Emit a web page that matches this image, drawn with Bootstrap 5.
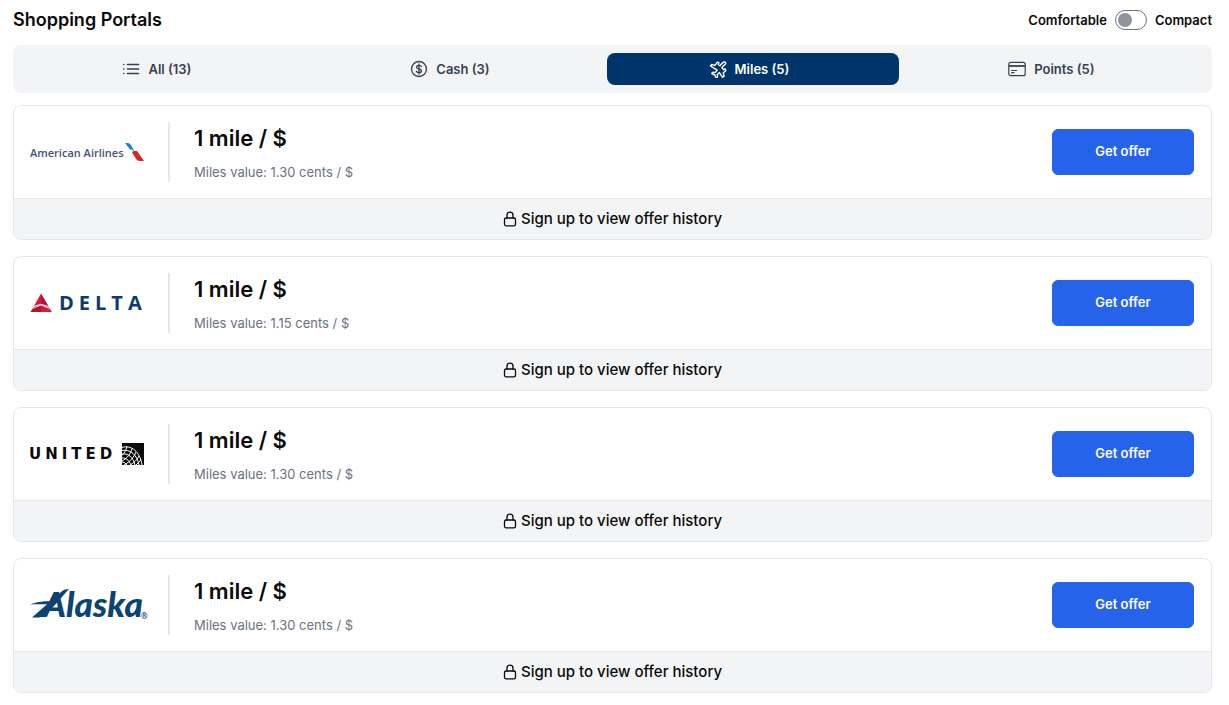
<!DOCTYPE html>
<html lang="en">
<head>
<meta charset="utf-8">
<meta name="viewport" content="width=device-width, initial-scale=1">
<title>Shopping Portals</title>
<link href="https://cdn.jsdelivr.net/npm/bootstrap@5.3.0/dist/css/bootstrap.min.css" rel="stylesheet">
<style>
  body { font-family: Inter, "Liberation Sans", sans-serif; color: #0a0a0a; background: #fff; padding: 7px 17px 12px 13px; }
  .page-title { font-size: 18px; line-height: 26px; font-weight: 600; }
  .density { font-size: 13px; line-height: 20px; font-weight: 600; }
  .density .form-check-input { width: 32px; height: 20px; margin: 0; border: 1px solid #6b7280; box-shadow: none; background-image: none; appearance: none; display: flex; align-items: center; padding: 2px; }
  .density .form-check-input::before { content: ""; width: 14px; height: 14px; border-radius: 50%; background: #8f949c; }
  .density .form-check-input:checked { background-color: #fff; justify-content: flex-end; }
  .portal-tabs { background: #f3f4f6; border-radius: 8px; }
  .portal-tabs .nav-link { background: transparent; font-size: 13px; line-height: 20px; font-weight: 600; color: #374151; padding: 6px 8px 6px 0; border-radius: 8px; }
  .portal-tabs .nav-link.active { background: #00356b; color: #fff; }
  .offer-card { border: 1px solid #e5e7eb; border-radius: 8px; overflow: hidden; }
  .offer-body { padding: 16px 17px 16px 16px; }
  .offer-logo { width: 140px; height: 60px; border-right: 2px solid #e5e7eb; }
  .offer-rate { font-size: 22px; line-height: 32px; font-weight: 600; }
  .offer-value { font-size: 13px; line-height: 20px; color: #6b7280; }
  .btn-offer { --bs-btn-bg: #2563eb; --bs-btn-color: #fff; --bs-btn-hover-bg: #1d4ed8; --bs-btn-hover-color: #fff; --bs-btn-border-color: #2563eb; width: 142px; height: 46px; font-size: 13px; font-weight: 600; border-radius: 6px; }
  .offer-history { background: #f3f4f6; border-top: 1px solid #e5e7eb; padding: 8px; font-size: 15px; line-height: 24px; font-weight: 500; }
  .offer-history a { color: #0a0a0a; }
  .line-icon { fill: none; stroke: currentColor; stroke-linecap: round; stroke-linejoin: round; }
</style>
</head>
<body>
<svg class="d-none" aria-hidden="true">
  <symbol id="lock" viewBox="0 0 14 16"><rect x="1.5" y="7" width="11" height="7.8" rx="1.6"/><path d="M4 7V4.2a3 3 0 0 1 6 0V7"/></symbol>
</svg>

<header class="d-flex justify-content-between align-items-center mb-2 pb-1">
  <h1 class="page-title mb-0">Shopping Portals</h1>
  <div class="density d-flex align-items-center gap-2">
    <label for="density">Comfortable</label>
    <div class="form-switch p-0 m-0 d-flex"><input class="form-check-input" type="checkbox" role="switch" id="density"></div>
    <label for="density">Compact</label>
  </div>
</header>

<nav class="portal-tabs nav d-flex gap-2 p-2" aria-label="Portal type">
  <button type="button" class="nav-link border-0 flex-fill d-flex justify-content-center align-items-center gap-2">
    <svg class="line-icon" width="18" height="18" viewBox="0 0 18 18" stroke-width="1.6"><path d="M5.500 4.500H16.500M5.500 9H16.500M5.500 13.500H16.500M1.800 4.500h.1M1.800 9h.1M1.800 13.500h.1"/></svg>All (13)</button>
  <button type="button" class="nav-link border-0 flex-fill d-flex justify-content-center align-items-center gap-2">
    <svg class="line-icon" width="18" height="18" viewBox="0 0 18 18" stroke-width="1.3"><circle cx="9" cy="9" r="7.5"/><path d="M11.4 6.7C11 5.8 10.1 5.4 9 5.4c-1.400 0-2.400.7-2.400 1.800 0 2.600 4.900 1 4.900 3.600 0 1.200-1.100 1.900-2.500 1.900-1.300 0-2.200-.5-2.600-1.500M9 4v10"/></svg>Cash (3)</button>
  <button type="button" class="nav-link active border-0 flex-fill d-flex justify-content-center align-items-center gap-2" aria-current="page">
    <svg class="line-icon" width="18" height="18" viewBox="0 0 18 18" stroke-width="1.4"><path d="M11 5l3-3c.8-.8 1.800-.9 2.300-.4s.4 1.500-.4 2.300l-3 3 1.500 2.200 1.800-.8.6 1.600-2.600 2.400.900 3.200-1.500 1.200-3.200-4.700-2.200 2.200.4 2.200-1.300 1-1.500-3-3-1.500 1-1.300 2.200.4L8.200 9.600 1.500 5.400l1.200-1.500 3.200.9L8.300 1.500l1.600.6-.8 1.800z" transform="translate(0 .6)"/></svg>Miles (5)</button>
  <button type="button" class="nav-link border-0 flex-fill d-flex justify-content-center align-items-center gap-2">
    <svg class="line-icon" width="18" height="18" viewBox="0 0 18 18" stroke-width="1.2"><rect x=".8" y="2.3" width="16.400" height="13.400" rx="2"/><path stroke-width="1.8" stroke-linecap="butt" d="M1 6h16"/><path d="M3.600 10.500H8.500M3.600 12.700H6"/></svg>Points (5)</button>
</nav>

<main class="d-flex flex-column gap-3 pt-2 mt-1">
  <article class="offer-card">
    <div class="offer-body d-flex align-items-center">
      <div class="offer-logo flex-shrink-0 d-flex align-items-center">
        <svg width="116" height="40" viewBox="0 0 116 40" role="img" aria-label="American Airlines">
          <text x="0" y="25" font-family="Open Sans, sans-serif" font-size="11" font-weight="600" fill="#42527d">American Airlines</text>
          <path d="M95 11h2.500c2 0 2.800 1 3.700 2.500l3.300 5.500c-1.500-1.500-3-1.500-4.500-1.500z" fill="#1487c4"/>
          <path d="M101.500 18.500c1.500-.6 3-.3 4 .5l-1.500 2z" fill="#b8c1c8"/>
          <path d="M102 20.500c1.500-1.500 3-1.800 5-1.400l7 9.900h-4c-2 0-3-.7-4-2.200z" fill="#d22a22"/>
        </svg>
      </div>
      <div class="ps-4 flex-grow-1">
        <h2 class="offer-rate mb-2">1 mile / $</h2>
        <p class="offer-value mb-0">Miles value: 1.30 cents / $</p>
      </div>
      <button type="button" class="btn btn-offer">Get offer</button>
    </div>
    <div class="offer-history d-flex justify-content-center"><a href="#" class="text-decoration-none d-flex align-items-center gap-1"><svg class="line-icon" width="14" height="16" stroke-width="1.3"><use href="#lock"/></svg>Sign up to view offer history</a></div>
  </article>

  <article class="offer-card">
    <div class="offer-body d-flex align-items-center">
      <div class="offer-logo flex-shrink-0 d-flex align-items-center">
        <svg width="118" height="40" viewBox="0 0 118 40" role="img" aria-label="Delta">
          <path d="M11 10.500v10.300L4 23z" fill="#e31837"/><path d="M11 10.500v10.300L18.500 23z" fill="#a6192e"/>
          <path d="M11 21.800L3.500 24 .5 29H11z" fill="#a6192e"/><path d="M11 21.800L18.700 24 22 29H11z" fill="#cf1f3a"/>
          <path d="M2.500 25.500L11 22l8.500 3.500" fill="none" stroke="#fff" stroke-width=".8"/>
          <text x="29" y="27" font-family="Open Sans, sans-serif" font-size="20" font-weight="700" letter-spacing="5" fill="#0b3c6f">DELTA</text>
        </svg>
      </div>
      <div class="ps-4 flex-grow-1">
        <h2 class="offer-rate mb-2">1 mile / $</h2>
        <p class="offer-value mb-0">Miles value: 1.15 cents / $</p>
      </div>
      <button type="button" class="btn btn-offer">Get offer</button>
    </div>
    <div class="offer-history d-flex justify-content-center"><a href="#" class="text-decoration-none d-flex align-items-center gap-1"><svg class="line-icon" width="14" height="16" stroke-width="1.3"><use href="#lock"/></svg>Sign up to view offer history</a></div>
  </article>

  <article class="offer-card">
    <div class="offer-body d-flex align-items-center">
      <div class="offer-logo flex-shrink-0 d-flex align-items-center">
        <svg width="116" height="40" viewBox="0 0 116 40" role="img" aria-label="United">
          <text x="-1" y="25" font-family="DejaVu Sans, sans-serif" font-size="15" font-weight="700" letter-spacing="4" fill="#0a0a0a">UNITED</text>
          <path d="M92 9h22v22H92z" fill="#0a0a0a"/>
          <g fill="none" stroke="#fff" stroke-width="1"><path d="M92 13.500c9-3 18 4 20 17.500M92 16.500c8-1.500 15 4 17 14.500M92 20c6-1 11 3 13 11M92 24c4 0 7 2 9 7M92 28q3 0 5 3"/><path d="M97 12.500c-1 4-3 7-5 9M102 14.500c-1 5-5 10-10 12.500M106 18c-2 5-6 10-12 13M109 22c-2 4-5 7-9 9M111 26l-5 5"/></g>
        </svg>
      </div>
      <div class="ps-4 flex-grow-1">
        <h2 class="offer-rate mb-2">1 mile / $</h2>
        <p class="offer-value mb-0">Miles value: 1.30 cents / $</p>
      </div>
      <button type="button" class="btn btn-offer">Get offer</button>
    </div>
    <div class="offer-history d-flex justify-content-center"><a href="#" class="text-decoration-none d-flex align-items-center gap-1"><svg class="line-icon" width="14" height="16" stroke-width="1.3"><use href="#lock"/></svg>Sign up to view offer history</a></div>
  </article>

  <article class="offer-card">
    <div class="offer-body d-flex align-items-center">
      <div class="offer-logo flex-shrink-0 d-flex align-items-center">
        <svg width="118" height="44" viewBox="0 0 118 44" role="img" aria-label="Alaska">
          <path d="M0 21.500c8-3 14-3.500 26-3.500l-4 3.500c-7 0-14-.5-22 0z" fill="#0b4470"/>
          <path d="M2 34.500L31 9q3-3 8-3L16 32q-4 3-14 2.500z" fill="#0b4470"/>
          <text x="13" y="34" font-family="Lato, sans-serif" font-size="35" font-style="italic" font-weight="900" fill="#0b4470">Alaska</text>
          <text x="111" y="36" font-family="Open Sans, sans-serif" font-size="8" font-weight="700" fill="#0b4470">®</text>
        </svg>
      </div>
      <div class="ps-4 flex-grow-1">
        <h2 class="offer-rate mb-2">1 mile / $</h2>
        <p class="offer-value mb-0">Miles value: 1.30 cents / $</p>
      </div>
      <button type="button" class="btn btn-offer">Get offer</button>
    </div>
    <div class="offer-history d-flex justify-content-center"><a href="#" class="text-decoration-none d-flex align-items-center gap-1"><svg class="line-icon" width="14" height="16" stroke-width="1.3"><use href="#lock"/></svg>Sign up to view offer history</a></div>
  </article>
</main>
<script src="https://cdn.jsdelivr.net/npm/bootstrap@5.3.0/dist/js/bootstrap.bundle.min.js"></script>
</body>
</html>
